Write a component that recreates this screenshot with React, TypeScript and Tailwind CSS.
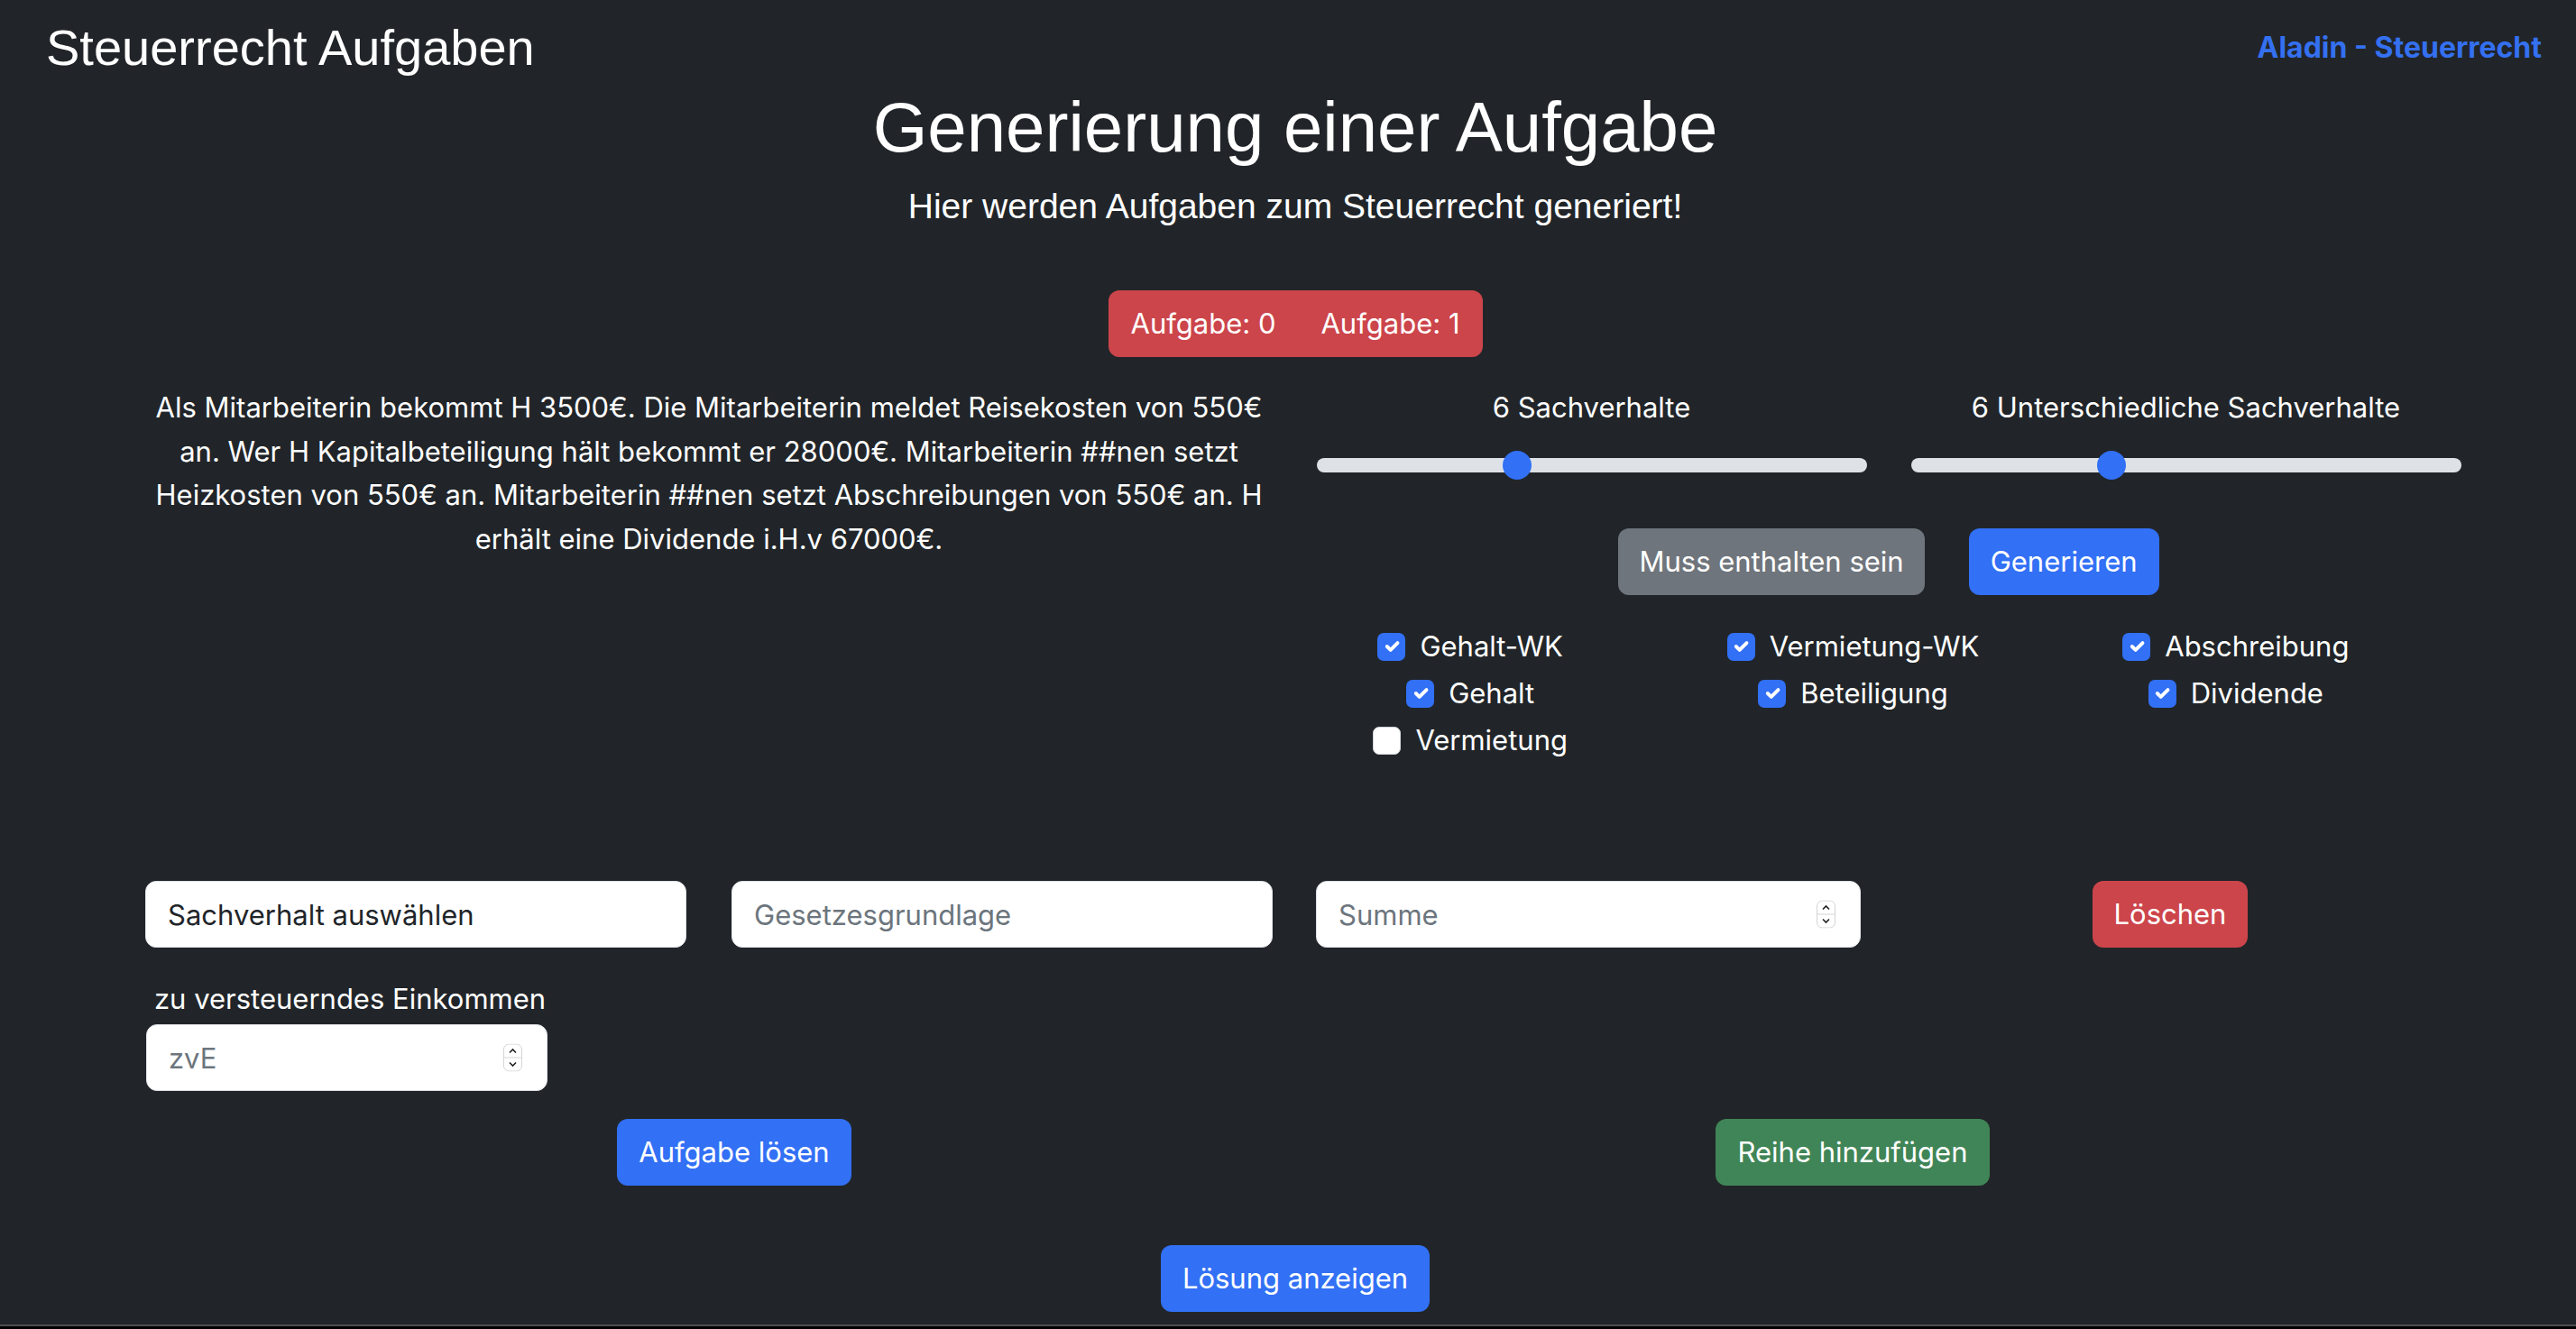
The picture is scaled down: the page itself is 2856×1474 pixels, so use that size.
const TASK_TEXT =
  'Als Mitarbeiterin bekommt H 3500€. Die Mitarbeiterin meldet Reisekosten von 550€ an. Wer H Kapitalbeteiligung hält bekommt er 28000€. Mitarbeiterin ##nen setzt Heizkosten von 550€ an. Mitarbeiterin ##nen setzt Abschreibungen von 550€ an. H erhält eine Dividende i.H.v 67000€.'

const CHECK_COLUMNS: Array<Array<{ label: string; checked: boolean }>> = [
  [
    { label: 'Gehalt-WK', checked: true },
    { label: 'Gehalt', checked: true },
    { label: 'Vermietung', checked: false },
  ],
  [
    { label: 'Vermietung-WK', checked: true },
    { label: 'Beteiligung', checked: true },
  ],
  [
    { label: 'Abschreibung', checked: true },
    { label: 'Dividende', checked: true },
  ],
]

function CheckItem({ label, checked }: { label: string; checked: boolean }) {
  return (
    <label className="mb-[4px] flex h-[48px] items-center gap-[16px] text-[31px]">
      {checked ? (
        <span className="flex h-[31px] w-[31px] items-center justify-center rounded-[7px] bg-[#3270f5]">
          <svg width="26" height="26" viewBox="0 0 20 20">
            <path d="m6 10 3 3 6-6" fill="none" stroke="#fff" strokeWidth="3" strokeLinecap="round" strokeLinejoin="round" />
          </svg>
        </span>
      ) : (
        <span className="h-[31px] w-[31px] rounded-[7px] border border-[#ced4da] bg-white" />
      )}
      {label}
    </label>
  )
}

function Slider({ label }: { label: string }) {
  return (
    <div className="flex w-[610px] flex-col items-center">
      <p className="text-[31px] leading-[48px]">{label}</p>
      <div className="relative mt-[24px] flex h-[32px] w-full items-center">
        <div className="h-[16px] w-full rounded-full bg-[#dee2e6]" />
        <div className="absolute left-[206px] top-0 h-[32px] w-[32px] rounded-full bg-[#3270f5]" />
      </div>
    </div>
  )
}

function Spinner() {
  return (
    <svg className="absolute right-[28px] top-1/2 -translate-y-1/2" width="21" height="31" viewBox="0 0 21 31">
      <rect x="0.5" y="0.5" width="20" height="30" rx="6" fill="#fff" stroke="#d4d4d4" />
      <line x1="1" y1="15.5" x2="20" y2="15.5" stroke="#d4d4d4" />
      <path d="M7 10 L10.5 6.5 L14 10" fill="none" stroke="#222" strokeWidth="1.6" />
      <path d="M7 21 L10.5 24.5 L14 21" fill="none" stroke="#222" strokeWidth="1.6" />
    </svg>
  )
}

function Field({ value, placeholder, number }: { value?: string; placeholder?: string; number?: boolean }) {
  return (
    <div className="relative h-[74px] w-full">
      <input
        readOnly
        defaultValue={value}
        placeholder={placeholder}
        className="h-full w-full rounded-[12px] border border-[#dee2e6] bg-white px-[24px] text-[31px] text-[#212529] outline-none placeholder:text-[#6c757d]"
      />
      {number && <Spinner />}
    </div>
  )
}

export default function App() {
  return (
    <div className="flex h-[1474px] flex-col bg-[#212529] font-['Inter',sans-serif] text-white">
      <nav className="flex h-[102px] shrink-0 items-center justify-between pl-[51px] pr-[38px] pt-[4px]">
        <span className="font-['Liberation_Sans',sans-serif] text-[56px] leading-none">Steuerrecht Aufgaben</span>
        <a href="#" className="text-[32px] font-bold leading-none text-[#3470f0]">
          Aladin - Steuerrecht
        </a>
      </nav>

      <main className="flex-1 pl-[136px]">
        <h1 className="w-[2600px] text-center font-['Liberation_Sans',sans-serif] text-[78px] leading-none">
          Generierung einer Aufgabe
        </h1>
        <p className="mt-[29px] w-[2600px] text-center font-['Liberation_Sans',sans-serif] text-[39px] leading-none">
          Hier werden Aufgaben zum Steuerrecht generiert!
        </p>

        <div className="mt-[74px] flex w-[2600px] justify-center">
          <div className="flex h-[74px] overflow-hidden rounded-[12px] bg-[#cc454b] text-[31px]">
            <button className="px-[25px]">Aufgabe: 0</button>
            <button className="px-[25px]">Aufgabe: 1</button>
          </div>
        </div>

        <div className="mt-[32px] flex items-start">
          <p className="w-[1300px] px-[25px] text-center text-[31px] leading-[48.6px]">{TASK_TEXT}</p>

          <div className="ml-[13px] flex w-[1290px] flex-col items-center">
            <div className="flex gap-[49px]">
              <Slider label="6 Sachverhalte" />
              <Slider label="6 Unterschiedliche Sachverhalte" />
            </div>

            <div className="mt-[54px] flex gap-[49px] text-[31px]">
              <button className="h-[74px] rounded-[12px] bg-[#6f757c] px-[23px]">Muss enthalten sein</button>
              <button className="h-[74px] rounded-[12px] bg-[#3270f5] px-[24px]">Generieren</button>
            </div>

            <div className="-ml-[31px] mt-[33px] grid w-[1273px] grid-cols-3 self-start">
              {CHECK_COLUMNS.map((col, i) => (
                <div key={i} className="flex flex-col items-center">
                  {col.map((item) => (
                    <CheckItem key={item.label} label={item.label} checked={item.checked} />
                  ))}
                </div>
              ))}
            </div>
          </div>
        </div>

        <div className="mt-[128px] grid w-[2600px] grid-cols-4">
          <div className="px-[25px]">
            <Field value="Sachverhalt auswählen" />
          </div>
          <div className="px-[25px]">
            <Field placeholder="Gesetzesgrundlage" />
          </div>
          <div className="px-[23px]">
            <Field placeholder="Summe" number />
          </div>
          <div className="flex justify-center px-[25px]">
            <button className="-ml-[10px] h-[74px] rounded-[12px] bg-[#cc454b] px-[24px] text-[31px]">Löschen</button>
          </div>
        </div>

        <p className="mt-[33px] pl-[35px] text-[31px] leading-[48px]">zu versteuerndes Einkommen</p>
        <div className="ml-[26px] mt-[4px] w-[445px]">
          <Field placeholder="zvE" number />
        </div>

        <div className="ml-[58px] mt-[31px] grid w-[2480px] grid-cols-2 text-[31px]">
          <div className="flex justify-center">
            <button className="h-[74px] rounded-[12px] bg-[#3270f5] px-[24px]">Aufgabe lösen</button>
          </div>
          <div className="flex justify-center">
            <button className="h-[74px] rounded-[12px] bg-[#408557] px-[24px]">Reihe hinzufügen</button>
          </div>
        </div>

        <div className="mt-[66px] flex w-[2600px] justify-center">
          <button className="h-[74px] rounded-[12px] bg-[#3270f5] px-[24px] text-[31px]">Lösung anzeigen</button>
        </div>
      </main>

      <div className="h-[2px] shrink-0 bg-[#4d4e50]" />
      <div className="h-[3px] shrink-0 bg-black" />
    </div>
  )
}
